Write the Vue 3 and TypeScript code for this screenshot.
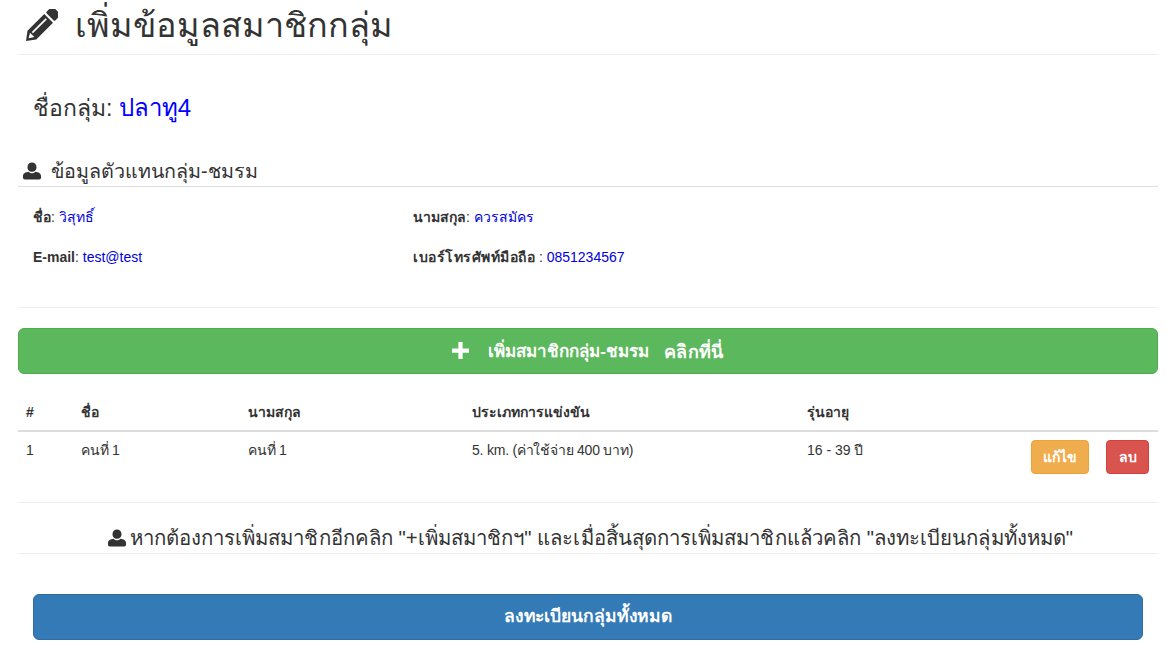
<script setup lang="ts">
interface Member {
  no: number
  first: string
  last: string
  kind: string
  age: string
}
const members: Member[] = [
  { no: 1, first: 'คนที่ 1', last: 'คนที่ 1', kind: '5. km. (ค่าใช้จ่าย 400 บาท)', age: '16 - 39 ปี' },
]
const userPath = 'M8 0.5C10.4 0.5 12 2.3 12 4.6C12 6.6 10.8 8.6 8 8.6C5.2 8.6 4 6.6 4 4.6C4 2.3 5.6 0.5 8 0.5ZM5 8.6C6 9.6 7 10 8 10C9 10 10 9.6 11 8.6C13.6 9 16 10 16 12.4V14C16 15 15.3 15.5 14.5 15.5H1.5C0.7 15.5 0 15 0 14V12.4C0 10 2.4 9 5 8.6Z'
</script>

<template>
  <div class="page">
    <h1 class="title">
      <svg class="pencil" viewBox="0 0 32 32" aria-hidden="true">
        <g transform="translate(1 31) rotate(-45)">
          <path d="M0 0L8 -6H31V6H8Z" />
          <path class="cut" d="M3.6 0L8.4 -3V3Z" />
          <rect class="cut" x="10" y="-2.2" width="19" height="1.7" />
          <rect x="33" y="-6" width="9" height="12" rx="1.5" />
        </g>
      </svg>
      <span>เพิ่มข้อมูลสมาชิกกลุ่ม</span>
    </h1>

    <p class="group">ชื่อกลุ่ม: <span class="blue name">ปลาทู4</span></p>

    <h2 class="section">
      <svg class="user" viewBox="0 0 16 16" aria-hidden="true"><path :d="userPath" /></svg>
      <span>ข้อมูลตัวแทนกลุ่ม-ชมรม</span>
    </h2>

    <div class="info">
      <div><b>ชื่อ</b>: <span class="blue">วิสุทธิ์</span></div>
      <div><b>นามสกุล</b>: <span class="blue">ควรสมัคร</span></div>
      <div><b>E-mail</b>: <span class="blue">test@test</span></div>
      <div><b class="phone">เบอร์โทรศัพท์มือถือ</b> : <span class="blue">0851234567</span></div>
    </div>

    <hr class="rule" />

    <button class="wide green" type="button">
      <svg class="plus" viewBox="0 0 16 16" aria-hidden="true"><path d="M6 0h4v6h6v4h-6v6H6v-6H0V6h6z" /></svg>
      <span class="label">เพิ่มสมาชิกกลุ่ม-ชมรม</span>
      <span class="label-end">คลิกที่นี่</span>
    </button>

    <table class="members">
      <thead>
        <tr>
          <th class="c1">#</th>
          <th class="c2">ชื่อ</th>
          <th class="c3">นามสกุล</th>
          <th class="c4">ประเภทการแข่งขัน</th>
          <th class="c5">รุ่นอายุ</th>
          <th></th>
        </tr>
      </thead>
      <tbody>
        <tr v-for="m in members" :key="m.no">
          <td>{{ m.no }}</td>
          <td class="tight">{{ m.first }}</td>
          <td class="tight">{{ m.last }}</td>
          <td class="tight">{{ m.kind }}</td>
          <td>{{ m.age }}</td>
          <td class="actions">
            <button class="small orange" type="button">แก้ไข</button>
            <button class="small red" type="button">ลบ</button>
          </td>
        </tr>
      </tbody>
    </table>

    <h2 class="note">
      <svg class="user" viewBox="0 0 16 16" aria-hidden="true"><path :d="userPath" /></svg>
      หากต้องการเพิ่มสมาชิกอีกคลิก "+เพิ่มสมาชิกฯ" และเมื่อสิ้นสุดการเพิ่มสมาชิกแล้วคลิก "ลงทะเบียนกลุ่มทั้งหมด"
    </h2>

    <div class="submit">
      <button class="wide blue-btn" type="button"><span class="submit-label">ลงทะเบียนกลุ่มทั้งหมด</span></button>
    </div>
  </div>
</template>

<style>
html, body { margin: 0; background: #fff; }
</style>

<style scoped>
.page {
  padding: 0 15px 8px 18px;
  font-family: "Liberation Sans", "Noto Sans", "DejaVu Sans", sans-serif;
  font-size: 14px;
  line-height: 20px;
  color: #333;
}
.blue { color: #0000e0; }
.title {
  display: flex;
  align-items: center;
  gap: 17px;
  box-sizing: border-box;
  height: 55px;
  margin: 0;
  padding: 0 0 4px 7px;
  border-bottom: 1px solid #eee;
  font-size: 34.2px;
  font-weight: 500;
  line-height: 40px;
}
.pencil { width: 33px; height: 33px; fill: #333; }
.pencil .cut { fill: #fff; }
.group {
  margin: 0;
  padding: 36px 15px 0;
  height: 62px;
  font-size: 23px;
  line-height: 34px;
}
.name { color: #00f; font-size: 24px; }
.section {
  display: flex;
  align-items: center;
  gap: 10px;
  height: 30px;
  margin: 0;
  padding: 3px 0 0 5px;
  border-bottom: 1px solid #ddd;
  font-size: 19.7px;
  font-weight: 500;
}
.user { width: 18px; height: 18px; fill: #333; flex: none; }
.info {
  display: grid;
  grid-template-columns: 380px 1fr;
  grid-auto-rows: 40px;
  padding: 20px 15px 0;
}
.info b { font-weight: 700; }
.info .phone { letter-spacing: 0.5px; }
.rule {
  height: 1px;
  margin: 20px 0;
  border: 0;
  background: #eee;
}
.wide {
  display: flex;
  align-items: center;
  justify-content: center;
  box-sizing: border-box;
  width: 100%;
  height: 46px;
  border: 1px solid;
  border-radius: 6px;
  font: 700 17.5px/1.33 "Liberation Sans", "Noto Sans", "DejaVu Sans", sans-serif;
  color: #fff;
}
.green { background: #5cb85c; border-color: #4cae4c; }
.blue-btn { background: #337ab7; border-color: #2e6da4; }
.plus { width: 17px; height: 17px; fill: #fff; margin: -2px 19px 0 0; }
.label { font-size: 17px; padding-top: 3px; }
.label-end { font-size: 18px; letter-spacing: 0.4px; margin-left: 15px; padding-top: 3px; }
.submit-label { font-size: 17.5px; letter-spacing: -0.1px; padding-top: 1px; }
.members {
  width: 100%;
  margin-top: 20px;
  border-collapse: collapse;
  table-layout: fixed;
}
.members th {
  box-sizing: border-box;
  padding: 8px;
  text-align: left;
  font-weight: 700;
  border-bottom: 2px solid #ddd;
}
.members td {
  box-sizing: border-box;
  height: 71px;
  padding: 8px;
  vertical-align: top;
  border-bottom: 1px solid #eee;
}
.members td.tight { letter-spacing: -0.22px; }
.c1 { width: 55px; }
.c2 { width: 167px; }
.c3 { width: 224px; }
.c4 { width: 335px; }
.c5 { width: 200px; }
.members td.actions { padding-right: 9px; text-align: right; white-space: nowrap; }
.small {
  height: 34px;
  padding: 0 11px;
  border: 1px solid;
  border-radius: 4px;
  font: 700 14px "Liberation Sans", "Noto Sans", "DejaVu Sans", sans-serif;
  color: #fff;
}
.orange { background: #f0ad4e; border-color: #eea236; }
.red { background: #d9534f; border-color: #d43f3a; margin-left: 17px; padding: 0 11.5px; }
.note {
  height: 51px;
  margin: 0;
  padding: 23px 0 0 5px;
  box-sizing: border-box;
  border-bottom: 1px solid #eee;
  text-align: center;
  font-size: 20.33px;
  font-weight: 500;
  letter-spacing: 0.06px;
  line-height: 24px;
}
.note .user { width: 18px; height: 18px; margin-right: -2px; vertical-align: -2px; }
.submit { padding: 40px 15px 0; }
</style>
